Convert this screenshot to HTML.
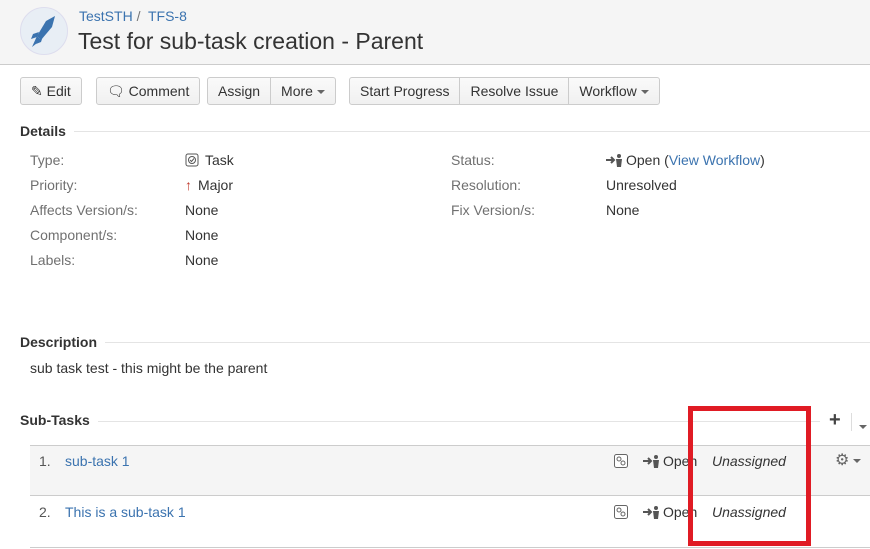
<!DOCTYPE html>
<html><head><meta charset="utf-8"><style>
*{margin:0;padding:0;box-sizing:border-box}
body{width:870px;height:549px;overflow:hidden;background:#fff;font-family:"Liberation Sans",Arial,sans-serif;font-size:14px;color:#333;position:relative}
.a{position:absolute;white-space:nowrap}
.link{color:#3b73af}
.lbl{color:#707070}
.btn{position:absolute;top:77px;height:28px;border:1px solid #ccc;border-radius:3px;background:linear-gradient(#fafafa,#f0f0f0);display:flex}
.btn span{padding:0 10px;line-height:26px;font-size:14px;color:#333;border-left:1px solid #ccc;white-space:nowrap}
.btn span:first-child{border-left:none}
.caret{display:inline-block;width:0;height:0;border-left:4px solid transparent;border-right:4px solid transparent;border-top:4px solid #666;vertical-align:middle;margin-left:4px}
.h{position:absolute;font-weight:bold;font-size:14px;color:#333;background:#fff;padding-right:8px}
.line{position:absolute;height:1px;background:#e4e4e4}
.st{display:inline-block;vertical-align:-2px;margin-right:3px}
</style></head><body>
<div class="a" style="left:0;top:0;width:870px;height:65px;background:#f5f5f5;border-bottom:1px solid #ccc"></div>
<div class="a" style="left:20px;top:7px;width:48px;height:48px;border-radius:50%;background:#e8eef5;border:1px solid #dde">
<svg width="46" height="46" viewBox="0 0 46 46"><path d="M34 8 L25 13 L16 28 L20 32 L31 19 Z" fill="#3b73af"/><path d="M16 28 L20 32 L11 39 Z" fill="#3b73af"/><path d="M18 24 L12 26 L10 31 L16 29Z M22 28 L20 34 L15 36 L19 31Z" fill="#3b73af"/></svg></div>
<div class="a link" style="left:79px;top:8px;font-size:14px">TestSTH <span style="color:#777">/</span>&nbsp; TFS-8</div>
<div class="a" style="left:78px;top:28px;font-size:23px;color:#333">Test for sub-task creation - Parent</div>

<div class="btn" style="left:20px"><span>✎ Edit</span></div>
<div class="btn" style="left:96px"><span>🗨 Comment</span></div>
<div class="btn" style="left:207px"><span>Assign</span><span>More<i class="caret"></i></span></div>
<div class="btn" style="left:349px"><span>Start Progress</span><span>Resolve Issue</span><span>Workflow<i class="caret"></i></span></div>

<div class="line" style="left:20px;top:131px;width:850px"></div>
<div class="h" style="left:20px;top:123px">Details</div>
<div class="a lbl" style="left:30px;top:152px">Type:</div>
<div class="a lbl" style="left:30px;top:177px">Priority:</div>
<div class="a lbl" style="left:30px;top:202px">Affects Version/s:</div>
<div class="a lbl" style="left:30px;top:227px">Component/s:</div>
<div class="a lbl" style="left:30px;top:252px">Labels:</div>
<div class="a" style="left:185px;top:152px"><svg class="st" width="14" height="14" viewBox="0 0 14 14" style="margin-right:6px"><rect x="1" y="1" width="12" height="12" rx="2" fill="none" stroke="#555"/><circle cx="7" cy="7" r="3.5" fill="none" stroke="#555"/><path d="M5 7 L6.5 8.5 L9 5.5" fill="none" stroke="#555"/></svg>Task</div>
<div class="a" style="left:185px;top:177px"><span style="color:#c0392b;font-weight:bold;margin-right:6px">↑</span>Major</div>
<div class="a" style="left:185px;top:202px">None</div>
<div class="a" style="left:185px;top:227px">None</div>
<div class="a" style="left:185px;top:252px">None</div>
<div class="a lbl" style="left:451px;top:152px">Status:</div>
<div class="a lbl" style="left:451px;top:177px">Resolution:</div>
<div class="a lbl" style="left:451px;top:202px">Fix Version/s:</div>
<div class="a" style="left:606px;top:152px"><svg class="st" width="17" height="14" viewBox="0 0 17 14"><path d="M0 7 H8 M5 4 L8 7 L5 10" stroke="#555" stroke-width="2" fill="none"/><circle cx="13" cy="3" r="2" fill="#555"/><path d="M10 6 H16 L15 14 H11 Z" fill="#555"/></svg>Open (<span class="link">View Workflow</span>)</div>
<div class="a" style="left:606px;top:177px">Unresolved</div>
<div class="a" style="left:606px;top:202px">None</div>

<div class="line" style="left:20px;top:342px;width:850px"></div>
<div class="h" style="left:20px;top:334px">Description</div>
<div class="a" style="left:30px;top:360px">sub task test - this might be the parent</div>

<div class="line" style="left:20px;top:421px;width:800px"></div>
<div class="h" style="left:20px;top:412px">Sub-Tasks</div>
<div class="a" style="left:829px;top:409px;font-size:20px;font-weight:bold;color:#444">+</div>
<div class="a" style="left:851px;top:413px;height:18px;border-left:1px solid #ddd"></div>
<div class="a" style="left:859px;top:418px"><i class="caret" style="margin:0"></i></div>

<div class="a" style="left:30px;top:445px;width:840px;height:51px;background:#f5f5f5;border-top:1px solid #ccc;border-bottom:1px solid #ccc"></div>
<div class="a" style="left:30px;top:547px;width:840px;height:1px;background:#ccc"></div>
<div class="a" style="left:39px;top:453px;color:#555">1.</div>
<div class="a link" style="left:65px;top:453px">sub-task 1</div>
<div class="a" style="left:39px;top:504px;color:#555">2.</div>
<div class="a link" style="left:65px;top:504px">This is a sub-task 1</div>
<svg class="a" style="left:614px;top:454px" width="14" height="14" viewBox="0 0 14 14"><rect x="0.5" y="0.5" width="13" height="13" rx="2" fill="#fff" stroke="#666"/><circle cx="5" cy="5" r="2" fill="none" stroke="#666"/><circle cx="9" cy="9" r="2" fill="none" stroke="#666"/></svg>
<svg class="a" style="left:614px;top:505px" width="14" height="14" viewBox="0 0 14 14"><rect x="0.5" y="0.5" width="13" height="13" rx="2" fill="#fff" stroke="#666"/><circle cx="5" cy="5" r="2" fill="none" stroke="#666"/><circle cx="9" cy="9" r="2" fill="none" stroke="#666"/></svg>
<div class="a" style="left:643px;top:453px;color:#333"><svg class="st" width="17" height="14" viewBox="0 0 17 14"><path d="M0 7 H8 M5 4 L8 7 L5 10" stroke="#555" stroke-width="2" fill="none"/><circle cx="13" cy="3" r="2" fill="#555"/><path d="M10 6 H16 L15 14 H11 Z" fill="#555"/></svg>Open</div>
<div class="a" style="left:643px;top:504px;color:#333"><svg class="st" width="17" height="14" viewBox="0 0 17 14"><path d="M0 7 H8 M5 4 L8 7 L5 10" stroke="#555" stroke-width="2" fill="none"/><circle cx="13" cy="3" r="2" fill="#555"/><path d="M10 6 H16 L15 14 H11 Z" fill="#555"/></svg>Open</div>
<div class="a" style="left:712px;top:453px;font-style:italic">Unassigned</div>
<div class="a" style="left:712px;top:504px;font-style:italic">Unassigned</div>
<div class="a" style="left:835px;top:450px;font-size:16px;color:#666">⚙<i class="caret"></i></div>

<div class="a" style="left:688px;top:406px;width:123px;height:140px;border:5px solid #e01b24"></div>
</body></html>
